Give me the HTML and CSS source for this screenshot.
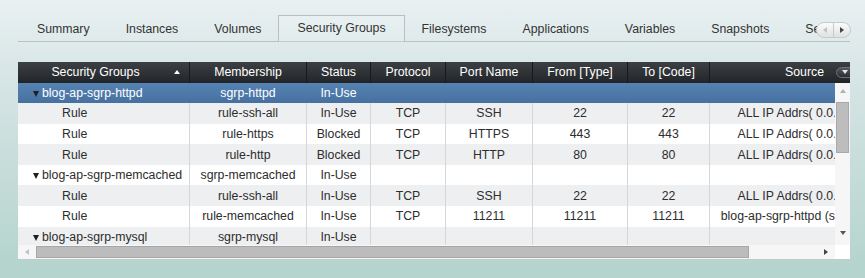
FILE: index.html
```html
<!DOCTYPE html>
<html lang="en">
<head>
    <meta charset="UTF-8">
    <title>Security Groups</title>
    <link rel="stylesheet" href="styles.css">
</head>
<body>
    <div class="page">
        <div class="tab-bar">
            <div class="tabs">
                <a class="tab">Summary</a>
                <a class="tab">Instances</a>
                <a class="tab">Volumes</a>
                <a class="tab active">Security Groups</a>
                <a class="tab">Filesystems</a>
                <a class="tab">Applications</a>
                <a class="tab">Variables</a>
                <a class="tab">Snapshots</a>
                <a class="tab">Services</a>
            </div>
            <div class="tab-scroller">
                <span class="scroll-btn"><i class="tri-left off"></i></span>
                <span class="scroll-btn"><i class="tri-right"></i></span>
            </div>
        </div>

        <div class="grid">
            <div class="grid-head">
                <div class="head-view">
                    <table class="grid-table">
                        <colgroup>
                            <col class="c-group"><col class="c-member"><col class="c-status"><col class="c-proto">
                            <col class="c-port"><col class="c-from"><col class="c-to"><col class="c-source">
                        </colgroup>
                        <tr>
                            <th class="sorted">Security Groups<i class="sort-up"></i></th>
                            <th>Membership</th>
                            <th>Status</th>
                            <th>Protocol</th>
                            <th>Port Name</th>
                            <th>From [Type]</th>
                            <th>To [Code]</th>
                            <th>Source</th>
                        </tr>
                    </table>
                </div>
                <div class="head-corner"><span class="menu-btn"><i class="tri-down light"></i></span></div>
            </div>

            <div class="grid-body">
                <div class="body-view">
                    <table class="grid-table">
                        <colgroup>
                            <col class="c-group"><col class="c-member"><col class="c-status"><col class="c-proto">
                            <col class="c-port"><col class="c-from"><col class="c-to"><col class="c-source">
                        </colgroup>
                        <tr class="selected">
                            <td class="group"><i class="tri-down"></i>blog-ap-sgrp-httpd</td>
                            <td>sgrp-httpd</td><td>In-Use</td><td></td><td></td><td></td><td></td><td></td>
                        </tr>
                        <tr class="alt">
                            <td class="rule">Rule</td>
                            <td>rule-ssh-all</td><td>In-Use</td><td>TCP</td><td>SSH</td><td>22</td><td>22</td><td>ALL IP Addrs( 0.0.0.0/0 )</td>
                        </tr>
                        <tr>
                            <td class="rule">Rule</td>
                            <td>rule-https</td><td>Blocked</td><td>TCP</td><td>HTTPS</td><td>443</td><td>443</td><td>ALL IP Addrs( 0.0.0.0/0 )</td>
                        </tr>
                        <tr class="alt">
                            <td class="rule">Rule</td>
                            <td>rule-http</td><td>Blocked</td><td>TCP</td><td>HTTP</td><td>80</td><td>80</td><td>ALL IP Addrs( 0.0.0.0/0 )</td>
                        </tr>
                        <tr>
                            <td class="group"><i class="tri-down"></i>blog-ap-sgrp-memcached</td>
                            <td>sgrp-memcached</td><td>In-Use</td><td></td><td></td><td></td><td></td><td></td>
                        </tr>
                        <tr class="alt">
                            <td class="rule">Rule</td>
                            <td>rule-ssh-all</td><td>In-Use</td><td>TCP</td><td>SSH</td><td>22</td><td>22</td><td>ALL IP Addrs( 0.0.0.0/0 )</td>
                        </tr>
                        <tr>
                            <td class="rule">Rule</td>
                            <td>rule-memcached</td><td>In-Use</td><td>TCP</td><td>11211</td><td>11211</td><td>11211</td><td>blog-ap-sgrp-httpd (sgrp-httpd)</td>
                        </tr>
                        <tr class="alt">
                            <td class="group"><i class="tri-down"></i>blog-ap-sgrp-mysql</td>
                            <td>sgrp-mysql</td><td>In-Use</td><td></td><td></td><td></td><td></td><td></td>
                        </tr>
                    </table>
                </div>
                <div class="vscroll">
                    <span class="arrow"><i class="tri-up off"></i></span>
                    <span class="vthumb"></span>
                    <span class="spacer"></span>
                    <span class="arrow down"><i class="tri-down dark"></i></span>
                </div>
            </div>

            <div class="grid-foot">
                <div class="hscroll">
                    <span class="harrow"><i class="tri-left off"></i></span>
                    <span class="hthumb"></span>
                    <span class="spacer"></span>
                    <span class="harrow"><i class="tri-right"></i></span>
                </div>
                <div class="foot-corner"></div>
            </div>
        </div>
    </div>
</body>
</html>
```

FILE: styles.css
```css
html, body {
    height: 100%;
}
body {
    margin: 0;
    font-family: "Liberation Sans", Arial, sans-serif;
    font-size: 12.3px;
    color: #2d2d2d;
    background: linear-gradient(#e9f0f2 0%, #d5e4e4 30%, #b3d3cc 100%);
    overflow: hidden;
}
.page {
    padding: 15px 0 0 18px;
    width: 832px;
}

/* tabs */
.tab-bar {
    position: relative;
    height: 26px;
    border-bottom: 1px solid #bcc2c3;
}
.tabs {
    display: flex;
    padding-left: 1px;
    height: 27px;
    overflow: hidden;
}
.tab {
    flex: none;
    padding: 0 18px;
    line-height: 26px;
    height: 26px;
    color: #333;
    white-space: nowrap;
    border: 1px solid transparent;
    border-bottom: none;
    margin: 0 -1px;
}
.tab.active {
    border-color: #b9bec0;
    background: rgba(255, 255, 255, 0.12);
    height: 27px;
    line-height: 25px;
}
.tab-scroller {
    position: absolute;
    left: 798px;
    top: 7px;
    width: 33px;
    height: 14px;
    display: flex;
    border: 1px solid #c6cacc;
    border-radius: 8px;
    background: linear-gradient(#fbfbfb, #dfe1e2);
}
.scroll-btn {
    flex: 1;
    display: flex;
    align-items: center;
    justify-content: center;
}
.scroll-btn + .scroll-btn {
    border-left: 1px solid #c6cacc;
}

/* triangles */
.tri-left, .tri-right, .tri-up, .tri-down {
    display: inline-block;
    width: 0;
    height: 0;
}
.tri-left {
    border-top: 3px solid transparent;
    border-bottom: 3px solid transparent;
    border-right: 4px solid #444;
}
.tri-right {
    border-top: 3px solid transparent;
    border-bottom: 3px solid transparent;
    border-left: 4px solid #444;
}
.tri-up {
    border-left: 3.5px solid transparent;
    border-right: 3.5px solid transparent;
    border-bottom: 4px solid #444;
}
.tri-down {
    border-left: 3.5px solid transparent;
    border-right: 3.5px solid transparent;
    border-top: 6px solid #1f1f1f;
}
.tri-left.off { border-right-color: #c2c2c2; }
.tri-up.off { border-bottom-color: #b0b0b0; }
.tri-down.dark { border-top-width: 4px; border-top-color: #555; }
.tri-down.light { border-top-width: 4px; border-top-color: #e6e6e6; }

/* grid */
.grid {
    margin-top: 20px;
    background: #fff;
    border-bottom: 1px solid #c4c8c8;
}
.grid-head, .grid-body, .grid-foot {
    display: flex;
}
.head-view, .body-view {
    width: 817px;
    overflow: hidden;
}
.grid-table {
    table-layout: fixed;
    border-collapse: separate;
    border-spacing: 0;
    width: 882px;
}
.c-group { width: 172px; }
.c-member { width: 117px; }
.c-status { width: 64px; }
.c-proto { width: 75px; }
.c-port { width: 87px; }
.c-from { width: 95px; }
.c-to { width: 82px; }
.c-source { width: 190px; }

.grid-table th {
    height: 20.5px;
    padding: 0;
    font-weight: normal;
    color: #fff;
    text-align: center;
    white-space: nowrap;
    background: linear-gradient(#3c4044, #222528);
    border-right: 1px solid #17191b;
}
.grid-table th.sorted {
    position: relative;
    padding-right: 16px;
}
.sort-up {
    position: absolute;
    right: 9px;
    top: 8px;
    border-left: 3px solid transparent;
    border-right: 3px solid transparent;
    border-bottom: 4px solid #fff;
}
.head-corner {
    width: 15px;
    overflow: hidden;
    background: linear-gradient(#3c4044, #222528);
    display: flex;
    align-items: center;
}
.menu-btn {
    flex: none;
    width: 22px;
    height: 11px;
    margin-left: 1px;
    border: 1px solid #6d7174;
    border-radius: 7px;
    background: linear-gradient(#54585c, #2c2f32);
    display: flex;
    align-items: center;
    padding-left: 5px;
    box-sizing: border-box;
}

.body-view {
    height: 162.5px;
}
.grid-table td {
    height: 20.6px;
    padding: 0;
    text-align: center;
    white-space: nowrap;
    overflow: hidden;
    border-right: 1px solid #d6d7d8;
}
.grid-table tr.alt td {
    background: #eeeff1;
}
.grid-table tr.selected td {
    color: #fff;
    background: linear-gradient(#5683b3, #4670a0);
    border-right-color: transparent;
}
.grid-table td.group {
    text-align: left;
    padding-left: 15px;
}
.grid-table td.group .tri-down {
    margin-right: 3px;
    vertical-align: 0;
}
.grid-table td.rule {
    text-align: left;
    padding-left: 44px;
}

.vscroll {
    width: 15px;
    height: 162.5px;
    background: #f6f6f6;
    display: flex;
    flex-direction: column;
}
.vscroll .arrow {
    height: 16px;
    display: flex;
    align-items: center;
    justify-content: center;
}
.vscroll .arrow.down {
    margin-bottom: 4px;
}
.vthumb {
    margin: 3px 1px 0 1px;
    height: 51px;
    background: #bdbdbd;
    border: 1px solid #a9a9a9;
    box-sizing: border-box;
}
.spacer {
    flex: 1;
}

.hscroll {
    width: 817px;
    height: 14px;
    display: flex;
    align-items: stretch;
    background: #f6f6f6;
}
.harrow {
    width: 18px;
    display: flex;
    align-items: center;
    justify-content: center;
}
.hthumb {
    width: 713px;
    margin: 1px 0;
    background: #bcbcbc;
    border: 1px solid #a6a6a6;
    box-sizing: border-box;
}
.foot-corner {
    width: 15px;
    background: #fff;
}
```
